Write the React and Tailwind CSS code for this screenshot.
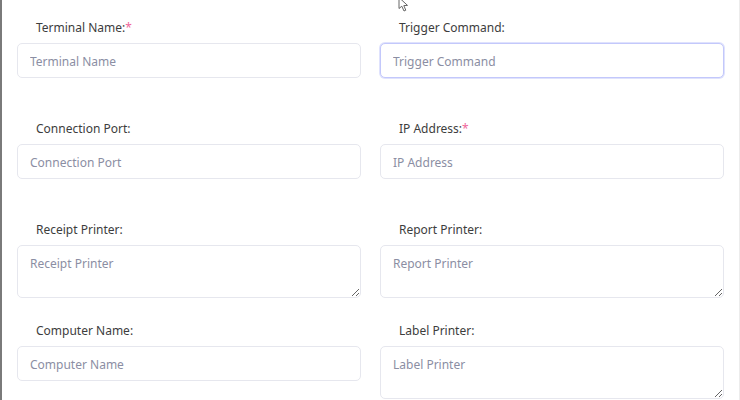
import React from 'react';

const fields = [
  { label: 'Terminal Name:', placeholder: 'Terminal Name', required: true },
  { label: 'Trigger Command:', placeholder: 'Trigger Command', focused: true },
  { label: 'Connection Port:', placeholder: 'Connection Port' },
  { label: 'IP Address:', placeholder: 'IP Address', required: true },
  { label: 'Receipt Printer:', placeholder: 'Receipt Printer', area: true },
  { label: 'Report Printer:', placeholder: 'Report Printer', area: true },
  { label: 'Computer Name:', placeholder: 'Computer Name' },
  { label: 'Label Printer:', placeholder: 'Label Printer', area: true },
];

const Field = ({ field }) => {
  const base =
    'w-full rounded-[5px] border bg-white px-[12px] text-[12px] text-[#333] outline-none placeholder:text-[#8b8ea3]';
  const border = field.focused ? 'border-[#c3c8fb] ring-1 ring-[#dfe2fd]' : 'border-[#e6e7ee]';
  return (
    <div className="flex flex-col">
      <label className="mb-[7px] h-4 pl-[19px] text-[12px] leading-4 text-[#3d3d3d]">
        {field.label}
        {field.required && <span className="text-[#f0679b]">*</span>}
      </label>
      {field.area ? (
        <textarea placeholder={field.placeholder} className={`${base} ${border} h-[53px] py-[10px] leading-4`} />
      ) : (
        <input type="text" placeholder={field.placeholder} className={`${base} ${border} h-[35px] pt-[1px]`} />
      )}
    </div>
  );
};

const App = () => {
  return (
    <div
      className="relative h-[400px] w-[740px] overflow-hidden border-l-2 border-r border-l-[#7a7a7a] border-r-[#ececec] bg-white"
      style={{ fontFamily: '"Noto Sans", "Open Sans", sans-serif' }}
    >
      <div className="grid grid-cols-[344px_344px] auto-rows-[101px] gap-x-[19px] pl-[15px] pt-[20px]">
        {fields.map(f => (
          <Field key={f.placeholder} field={f} />
        ))}
      </div>
      {/* mouse cursor */}
      <svg className="absolute left-[396px] top-[-3px]" width="14" height="16" viewBox="0 0 14 16">
        <path d="M1 0.5 L1 11.5 L3.8 9.2 L6 14 L7.8 13.2 L5.8 8.6 L9.5 8.4 Z" fill="#fff" stroke="#555" strokeWidth="0.9" />
      </svg>
    </div>
  );
};

export default App;
